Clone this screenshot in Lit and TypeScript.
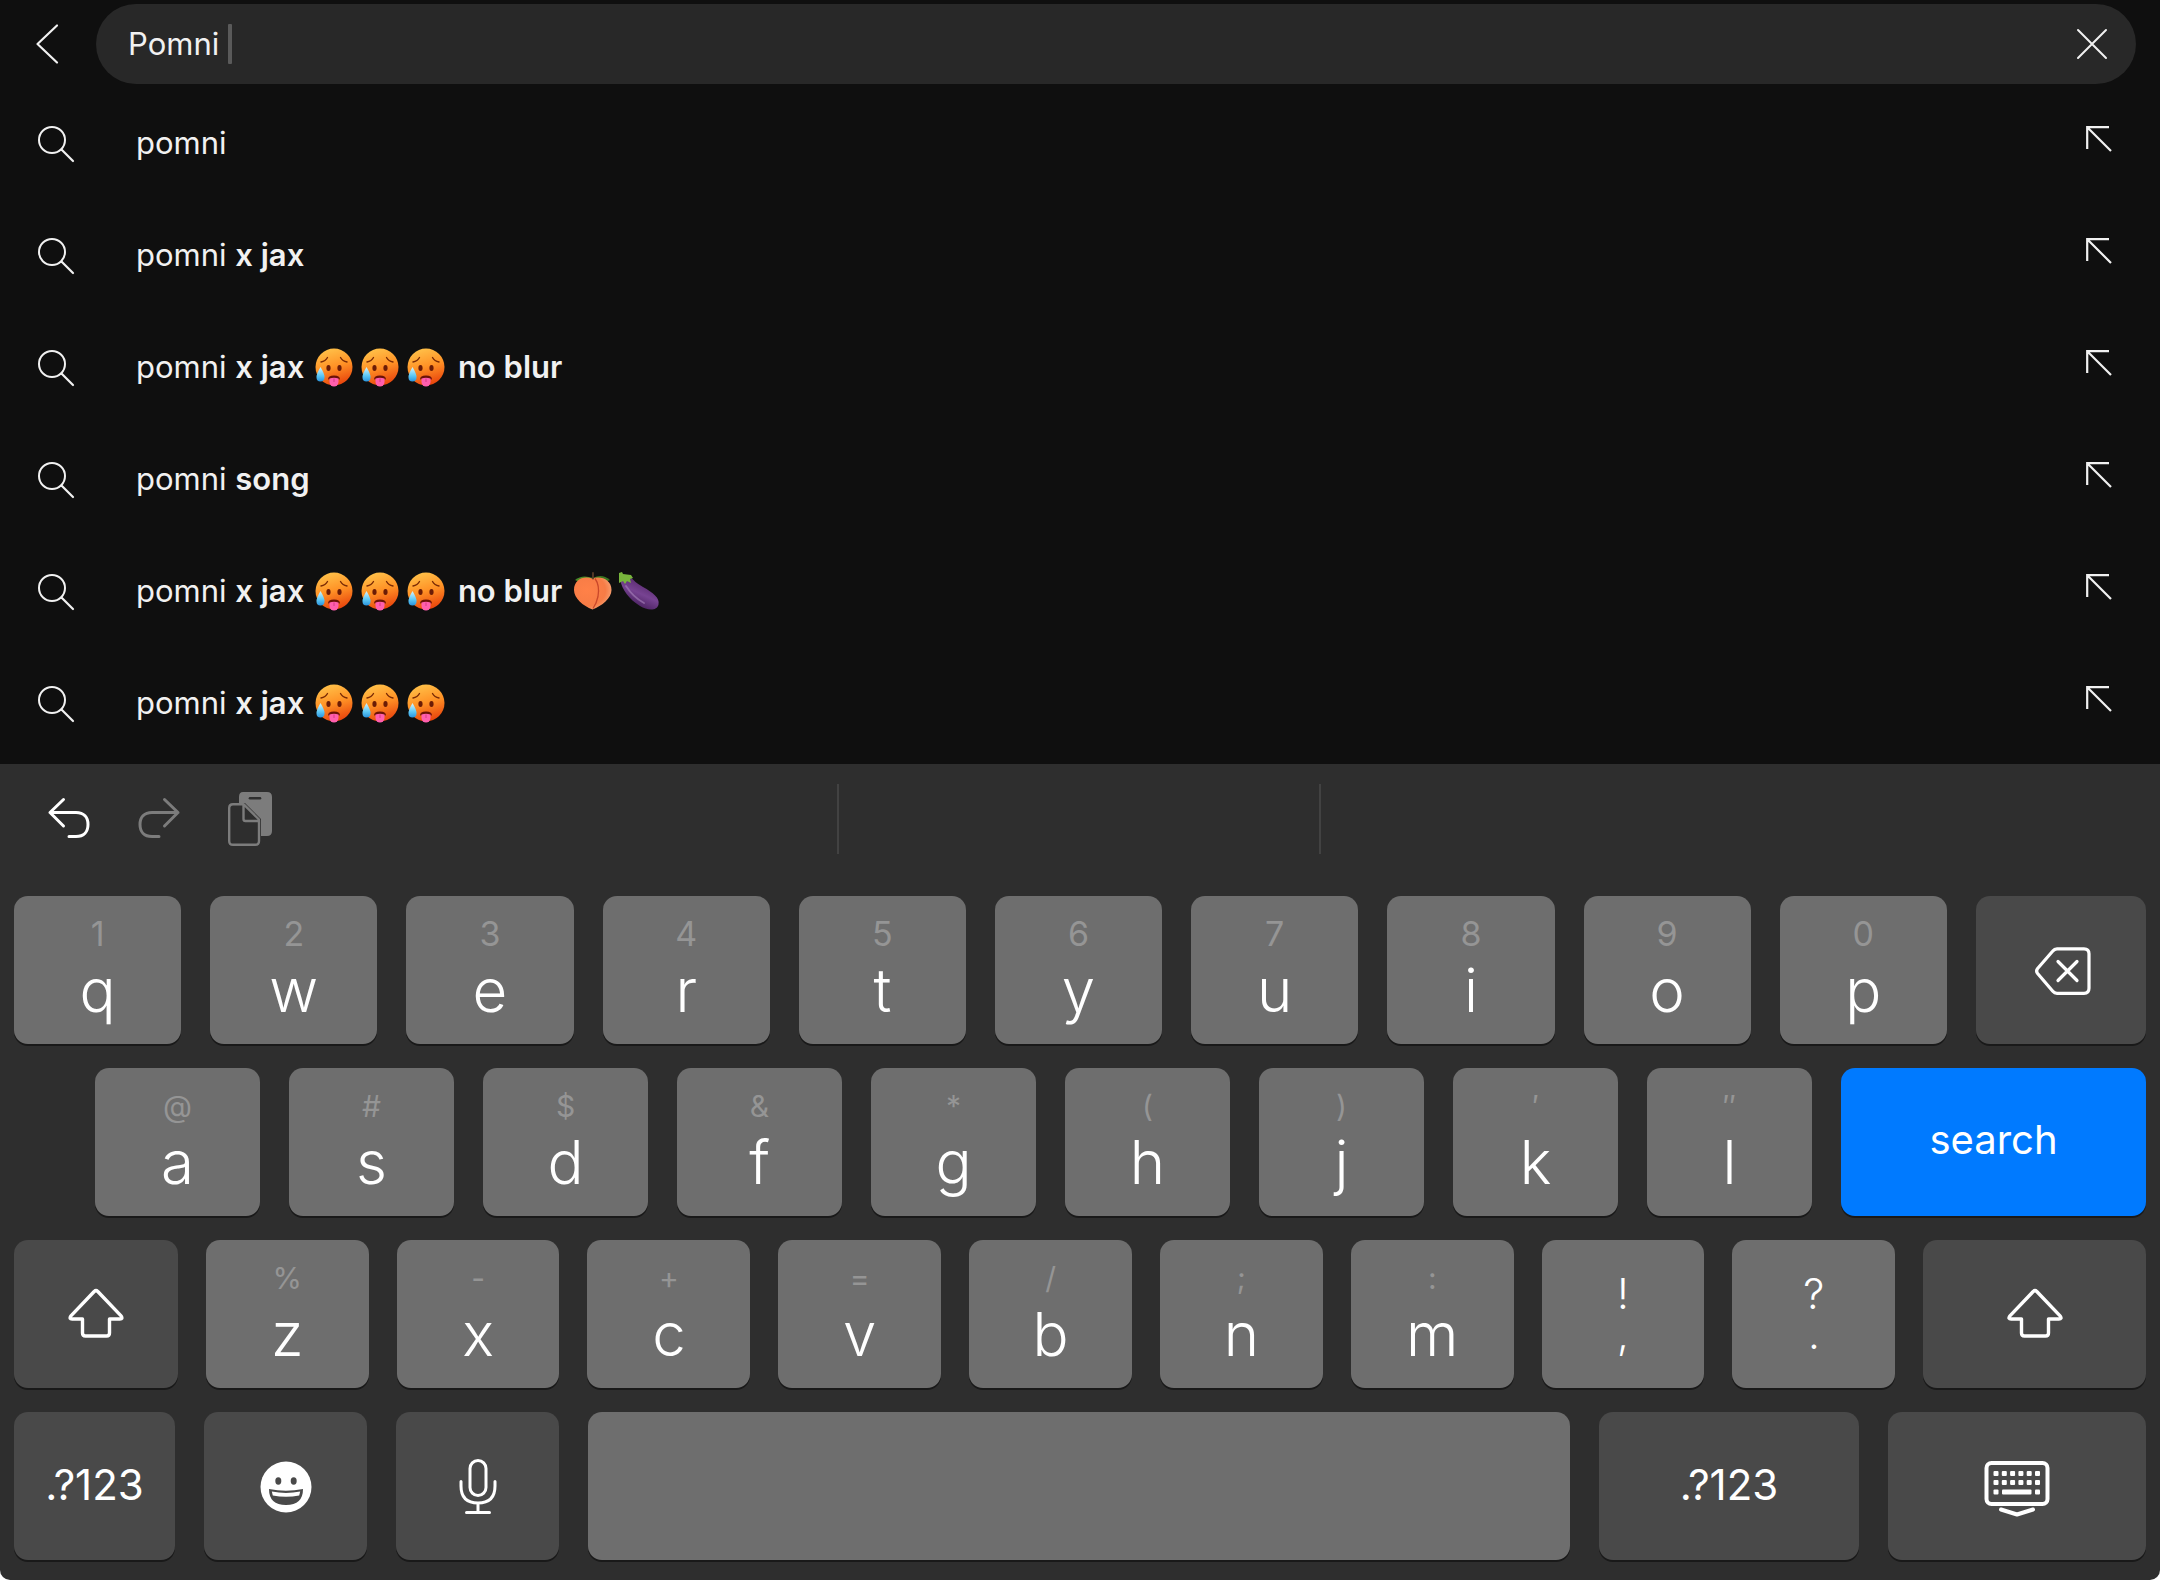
import { LitElement, html, svg, css, nothing, type TemplateResult } from "lit";
import { customElement, property } from "lit/decorators.js";

type Part = { text: string; strong?: boolean } | { emoji: "hot" | "peach" | "eggplant" };

const hot = (n: number): Part[] => Array.from({ length: n }, () => ({ emoji: "hot" as const }));

const SUGGESTIONS: Part[][] = [
  [{ text: "pomni" }],
  [{ text: "pomni " }, { text: "x jax", strong: true }],
  [{ text: "pomni " }, { text: "x jax ", strong: true }, ...hot(3), { text: " no blur", strong: true }],
  [{ text: "pomni " }, { text: "song", strong: true }],
  [
    { text: "pomni " },
    { text: "x jax ", strong: true },
    ...hot(3),
    { text: " no blur ", strong: true },
    { emoji: "peach" },
    { emoji: "eggplant" },
  ],
  [{ text: "pomni " }, { text: "x jax ", strong: true }, ...hot(3)],
];

const EMOJI: Record<string, { label: string; art: TemplateResult }> = {
  hot: {
    label: "🥵",
    art: svg`
      <circle cx="22" cy="19" r="18.5" fill="url(#skin)"/>
      <path d="M9 14q4.500-.800 6.500-4.500M28.500 9.500q2 3.700 6.500 4.500" fill="none" stroke="#7a2a05" stroke-width="1.400" stroke-linecap="round"/>
      <ellipse cx="16.500" cy="20" rx="2.100" ry="2.900" fill="#6b1c06"/>
      <ellipse cx="27.500" cy="20" rx="2.100" ry="2.900" fill="#6b1c06"/>
      <path d="M16 31.500q0-4 6-4t6 4q-6-1.500-12 0z" fill="#6b1206"/>
      <path d="M17.500 30.500q4.500-1.500 9 0v3.500a4.500 4.500 0 0 1-9 0z" fill="#ff5fae"/>
      <path d="M22 30.500v3.500" stroke="#d93a86" stroke-width="1"/>
      <path d="M8.500 19q4.500 7.500 4 10.500a4 4 0 0 1-8 0q-.400-3 4-10.500z" fill="url(#drop)"/>`,
  },
  peach: {
    label: "🍑",
    art: svg`
      <path d="M23 6q-11-4-18 2 8 5 18-2z" fill="#4a8a28"/>
      <path d="M23 6q9-5 17 2-8 5-17-2z" fill="#3c7620"/>
      <path d="M22.500 37.500C13 34 4 26 4 18 4 8 13 3.500 22 6.500c9-3 19.500 1 19.500 11.500C41.500 26 32 34 22.500 37.500z" fill="url(#peachskin)"/>
      <path d="M25 6.500q5 7 3 18-1.500 7-5 12" fill="none" stroke="#c9472a" stroke-width="1.300"/>
      <path d="M23 6.500V1" stroke="#5a3c28" stroke-width="1.800" stroke-linecap="round"/>`,
  },
  eggplant: {
    label: "🍆",
    art: svg`
      <path d="M4 7q1-4 9-4 5 7 14 12c10 5.500 17 11 15.500 17.500C41 39.500 31 38.500 24 34 13 27 6 18 4 7z" fill="url(#aubergine)"/>
      <path d="M10 14q7 11 18 17" fill="none" stroke="#a984bd" stroke-width="1.800" stroke-linecap="round" opacity=".600"/>
      <path d="M3 1l3-1 1 2 8 1 2 3-3 1 1 4-4-2-2 3-2-3-4 2q0-5 0-10z" fill="#78b53c"/>`,
  },
};

const DEFS = svg`
  <defs>
    <linearGradient id="skin" x1="0.300" y1="0" x2=".6" y2="1">
      <stop offset="0" stop-color="#ffc24a"/><stop offset=".5" stop-color="#ff9226"/><stop offset="1" stop-color="#e8430c"/>
    </linearGradient>
    <linearGradient id="drop" x1="0" y1="0" x2="0" y2="1">
      <stop offset="0" stop-color="#d8f6ff"/><stop offset=".6" stop-color="#5cc8f5"/><stop offset="1" stop-color="#2a93dc"/>
    </linearGradient>
    <radialGradient id="peachskin" cx=".35" cy=".4" r=".7">
      <stop offset="0" stop-color="#ff8148"/><stop offset=".7" stop-color="#f77c46"/><stop offset="1" stop-color="#f7a577"/>
    </radialGradient>
    <linearGradient id="aubergine" x1=".6" y1=".2" x2=".3" y2=".8">
      <stop offset="0" stop-color="#5a2c70"/><stop offset=".5" stop-color="#774392"/><stop offset="1" stop-color="#4f2566"/>
    </linearGradient>
  </defs>`;

const emoji = (name: string) => html`<svg class="emoji" viewBox="0 0 46 40" role="img" aria-label=${EMOJI[name].label}>
  ${DEFS}${EMOJI[name].art}
</svg>`;

const icon = (w: number, h: number, art: TemplateResult) =>
  html`<svg width=${w} height=${h} viewBox="0 0 ${w} ${h}" fill="none" stroke="currentColor"
    stroke-linecap="round" stroke-linejoin="round" aria-hidden="true">${art}</svg>`;

const ICONS = {
  back: () => icon(22, 40, svg`<path d="M21 1.500L1.500 20 21 38.500" stroke-width="2.200"/>`),
  clear: () => icon(32, 32, svg`<path d="M2 2l28 28M30 2L2 30" stroke-width="2"/>`),
  search: () => icon(36, 36, svg`<circle cx="14" cy="14" r="13" stroke-width="2"/><path d="M23.500 23.500L35 35" stroke-width="2.200"/>`),
  fill: () => icon(26, 26, svg`<path d="M1.200 23V1.200H23M1.500 1.500L25 25" stroke-width="2.200" stroke-linecap="butt" stroke-linejoin="miter"/>`),
  undo: () => icon(42, 42, svg`<path d="M15.500 1.500L2 14.500 15.500 28M2 14.500h26c8 0 12 5 12 12s-4 12-12 12h-7" stroke-width="3"/>`),
  redo: () => icon(42, 42, svg`<path d="M26.500 1.500L40 14.500 26.500 28M40 14.500H14C6 14.500 2 19.500 2 26.500s4 12 12 12h7" stroke-width="3"/>`),
  paste: () => icon(44, 54, svg`
    <path d="M15 0h24q5 0 5 5v34q0 5-5 5h-6V27L17 11h-6V5q0-5 4-5z" fill="currentColor" stroke="none"/>
    <path d="M22 6.200h10" stroke="#2e2e2e" stroke-width="2.600"/>
    <path d="M16 14l13 13H17q-1 0-1-1z" fill="#2e2e2e" stroke="none"/>
    <path d="M5 12.200h10.500L31 27.500V49q0 3.800-3.800 3.800H5Q1.200 52.800 1.200 49V16q0-3.800 3.800-3.800zM15.500 12.500V27q0 2 2 2H31" stroke-width="2.400"/>`),
  backspace: () => icon(60, 48, svg`
    <path d="M26 1.800h27q5 0 5 5v34.500q0 5-5 5H26q-2.500 0-4.200-2L6.600 26.500q-2-2.500 0-5L21.800 4q1.700-2.200 4.200-2.200z" stroke-width="3.200"/>
    <path d="M27 14.500l19 19M46 14.500l-19 19" stroke-width="3.200"/>`),
  shift: () => icon(56, 52, svg`
    <path d="M26.200 2.500q1.800-1.700 3.600 0l23.500 24.700q2 2.800-1.400 2.800H41.500V44q0 3-3 3h-21q-3 0-3-3V30H4.100q-3.400 0-1.400-2.800z" stroke-width="3.400"/>`),
  smile: () => icon(52, 52, svg`
    <circle cx="26" cy="26" r="25.500" fill="currentColor" stroke="none"/>
    <g fill="#494949" stroke="none"><ellipse cx="18.300" cy="20" rx="3" ry="3.700"/><ellipse cx="33.700" cy="20" rx="3" ry="3.700"/>
    <path d="M9 28q17 3.500 34 0 0 16-17 16T9 28z"/></g>
    <path d="M11.800 30.600q14.200 2.600 28.400 0l-1 3.800q-13.200 2.600-26.400 0z" fill="currentColor" stroke="none"/>`),
  mic: () => icon(38, 56, svg`
    <rect x="11" y="1.500" width="16" height="35" rx="8" stroke-width="3"/>
    <path d="M2 22.500V27q0 17 17 17t17-17v-4.500M19 44v9.500M7.500 53.500h23" stroke-width="3"/>`),
  hide: () => icon(66, 56, svg`
    <rect x="2.500" y="4" width="61" height="41" rx="5" stroke-width="4"/>
    <g fill="currentColor" stroke="none">
      ${[0, 1, 2, 3, 4, 5].map((i) => svg`<rect x=${9.5 + i * 8.3} y="12" width="5" height="5" rx="1"/><rect x=${9.5 + i * 8.3} y="21" width="5" height="5" rx="1"/>`)}
      <rect x="9.500" y="30.500" width="5" height="5" rx="1"/><rect x="51" y="30.500" width="5" height="5" rx="1"/>
      <rect x="18" y="30.500" width="29.500" height="5" rx="1"/>
    </g>
    <path d="M17 50.500l16 5 16-5" stroke-width="4"/>`),
};

@customElement("search-panel")
class SearchPanel extends LitElement {
  static styles = css`
    :host { display: block; background: #0f0f0f; color: #f1f1f1; padding: 4px 0; font: 400 31px/40px Inter, "Liberation Sans", sans-serif; }
    * { box-sizing: border-box; }
    button { border: 0; padding: 0; margin: 0; background: none; color: inherit; font: inherit; text-align: left; display: flex; align-items: center; cursor: pointer; }
    svg { display: block; flex: none; overflow: visible; }
    .bar { display: flex; height: 80px; padding-right: 24px; }
    .back { width: 96px; padding-left: 36px; }
    .field { flex: 1; display: flex; align-items: center; border-radius: 40px; background: #282828; padding: 0 28px 0 32px; }
    .entry { flex: 1; display: flex; align-items: center; min-width: 0; }
    .query { field-sizing: content; border: 0; padding: 0; margin: 0; background: none; color: inherit; font: inherit; outline: 0; }
    .caret { width: 4px; height: 40px; border-radius: 1px; background: #5a5a5a; }
    .list { list-style: none; margin: 4px 0 0; padding: 0; }
    .row { display: flex; height: 112px; }
    .pick { flex: 1; padding-left: 38px; gap: 62px; }
    .fill { padding: 0 48px 10px 24px; }
    .text { white-space: pre; padding-bottom: 2px; }
    .strong { font-weight: 600; }
    .emoji { display: inline-block; width: 46px; height: 40px; vertical-align: -10px; }
  `;

  render() {
    return html`
      <form class="bar" role="search">
        <button class="back" type="button" aria-label="Back">${ICONS.back()}</button>
        <div class="field">
          <label class="entry"><input class="query" type="text" aria-label="Search" .value=${"Pomni "} /><span class="caret"></span></label>
          <button type="button" aria-label="Clear">${ICONS.clear()}</button>
        </div>
      </form>
      <ul class="list">
        ${SUGGESTIONS.map(
          (parts) => html`<li class="row">
            <button class="pick" type="button">
              ${ICONS.search()}
              <span class="text">${parts.map((p) => ("emoji" in p ? emoji(p.emoji) : html`<span class=${p.strong ? "strong" : "plain"}>${p.text}</span>`))}</span>
            </button>
            <button class="fill" type="button" aria-label="Use suggestion">${ICONS.fill()}</button>
          </li>`
        )}
      </ul>
    `;
  }
}

interface Key {
  main?: string;
  hint?: string;
  icon?: () => TemplateResult;
  label?: string;
  grow: number;
  kind?: "letter" | "pair" | "dark" | "blue" | "space";
}

const letters = (main: string, hints: string[], grow: number): Key[] =>
  [...main].map((c, i) => ({ main: c, hint: hints[i], grow, kind: "letter" as const }));

const ROWS: { name: string; keys: Key[] }[] = [
  { name: "top", keys: [...letters("qwertyuiop", [..."1234567890"], 167), { icon: ICONS.backspace, label: "Delete", grow: 170, kind: "dark" }] },
  { name: "home", keys: [...letters("asdfghjkl", ["@", "#", "$", "&", "*", "(", ")", "′", "″"], 165), { main: "search", grow: 305, kind: "blue" }] },
  {
    name: "low",
    keys: [
      { icon: ICONS.shift, label: "Shift", grow: 164, kind: "dark" },
      ...letters("zxcvbnm", ["%", "-", "+", "=", "/", ";", ":"], 163),
      { main: ",", hint: "!", grow: 163, kind: "pair" },
      { main: ".", hint: "?", grow: 163, kind: "pair" },
      { icon: ICONS.shift, label: "Shift", grow: 223, kind: "dark" },
    ],
  },
  {
    name: "base",
    keys: [
      { main: ".?123", grow: 161, kind: "dark" },
      { icon: ICONS.smile, label: "Emoji", grow: 163, kind: "dark" },
      { icon: ICONS.mic, label: "Dictate", grow: 163, kind: "dark" },
      { label: "Space", grow: 982, kind: "space" },
      { main: ".?123", grow: 260, kind: "dark" },
      { icon: ICONS.hide, label: "Hide keyboard", grow: 258, kind: "dark" },
    ],
  },
];

@customElement("touch-keyboard")
class TouchKeyboard extends LitElement {
  @property({ attribute: false }) rows = ROWS;

  static styles = css`
    :host { display: block; background: #2e2e2e; color: #fff; border-radius: 0 0 10px 10px; padding-bottom: 20px; font: 400 42px/44px Inter, "Liberation Sans", sans-serif; }
    * { box-sizing: border-box; }
    button { border: 0; padding: 0; margin: 0; background: none; color: inherit; font: inherit; cursor: pointer; }
    svg { display: block; overflow: visible; }
    .tools { display: grid; grid-template-columns: 838fr 482fr 838fr; height: 132px; padding: 20px 0 42px; }
    .slot { border-right: 2px solid #424242; }
    .slot:last-child { border: 0; }
    .edits { display: flex; align-items: center; gap: 48px; padding: 0 0 0 48px; }
    .off { color: #7c7c7c; }
    .rows { display: flex; flex-direction: column; gap: 24px; padding: 0 14px; }
    .row { display: flex; gap: 29px; }
    .low { gap: 28px; }
    .home { padding-left: 81px; }
    .key { min-width: 0; flex-basis: 0; height: 148px; border-radius: 14px; background: #6e6e6e; box-shadow: 0 2px 0 #191919; display: flex; flex-direction: column; align-items: center; justify-content: center; }
    .dark { background: #494949; }
    .dark .main { padding-bottom: 2px; }
    .dark svg { margin-top: 2px; }
    .blue { background: #007aff; padding-bottom: 4px; font-size: 40px; }
    .letter { justify-content: flex-start; padding-top: 18px; gap: 6px; }
    .letter .hint { font-size: 30px; line-height: 40px; color: #959595; }
    .top .hint { font-size: 34px; }
    .letter .main { font-size: 60px; line-height: 60px; font-weight: 300; }
    .pair { line-height: 40px; font-weight: 300; }
  `;

  render() {
    return html`
      <div class="tools">
        <div class="slot edits">
          <button type="button" aria-label="Undo">${ICONS.undo()}</button>
          <button class="off" type="button" aria-label="Redo">${ICONS.redo()}</button>
          <button class="off" type="button" aria-label="Paste">${ICONS.paste()}</button>
        </div>
        <div class="slot"></div>
        <div class="slot"></div>
      </div>
      <div class="rows">
        ${this.rows.map(
          (r) => html`<div class="row ${r.name}">
            ${r.keys.map(
              (k) => html`<button type="button" class="key ${k.kind}" style="flex-grow:${k.grow}" aria-label=${k.label ?? nothing}>
                ${k.hint ? html`<span class="hint">${k.hint}</span>` : nothing}
                ${k.main ? html`<span class="main">${k.main}</span>` : nothing}
                ${k.icon ? k.icon() : nothing}
              </button>`
            )}
          </div>`
        )}
      </div>
    `;
  }
}

@customElement("app-root")
class AppRoot extends LitElement {
  static styles = css`:host { display: block; }`;

  render() {
    return html`<search-panel></search-panel><touch-keyboard></touch-keyboard>`;
  }
}
